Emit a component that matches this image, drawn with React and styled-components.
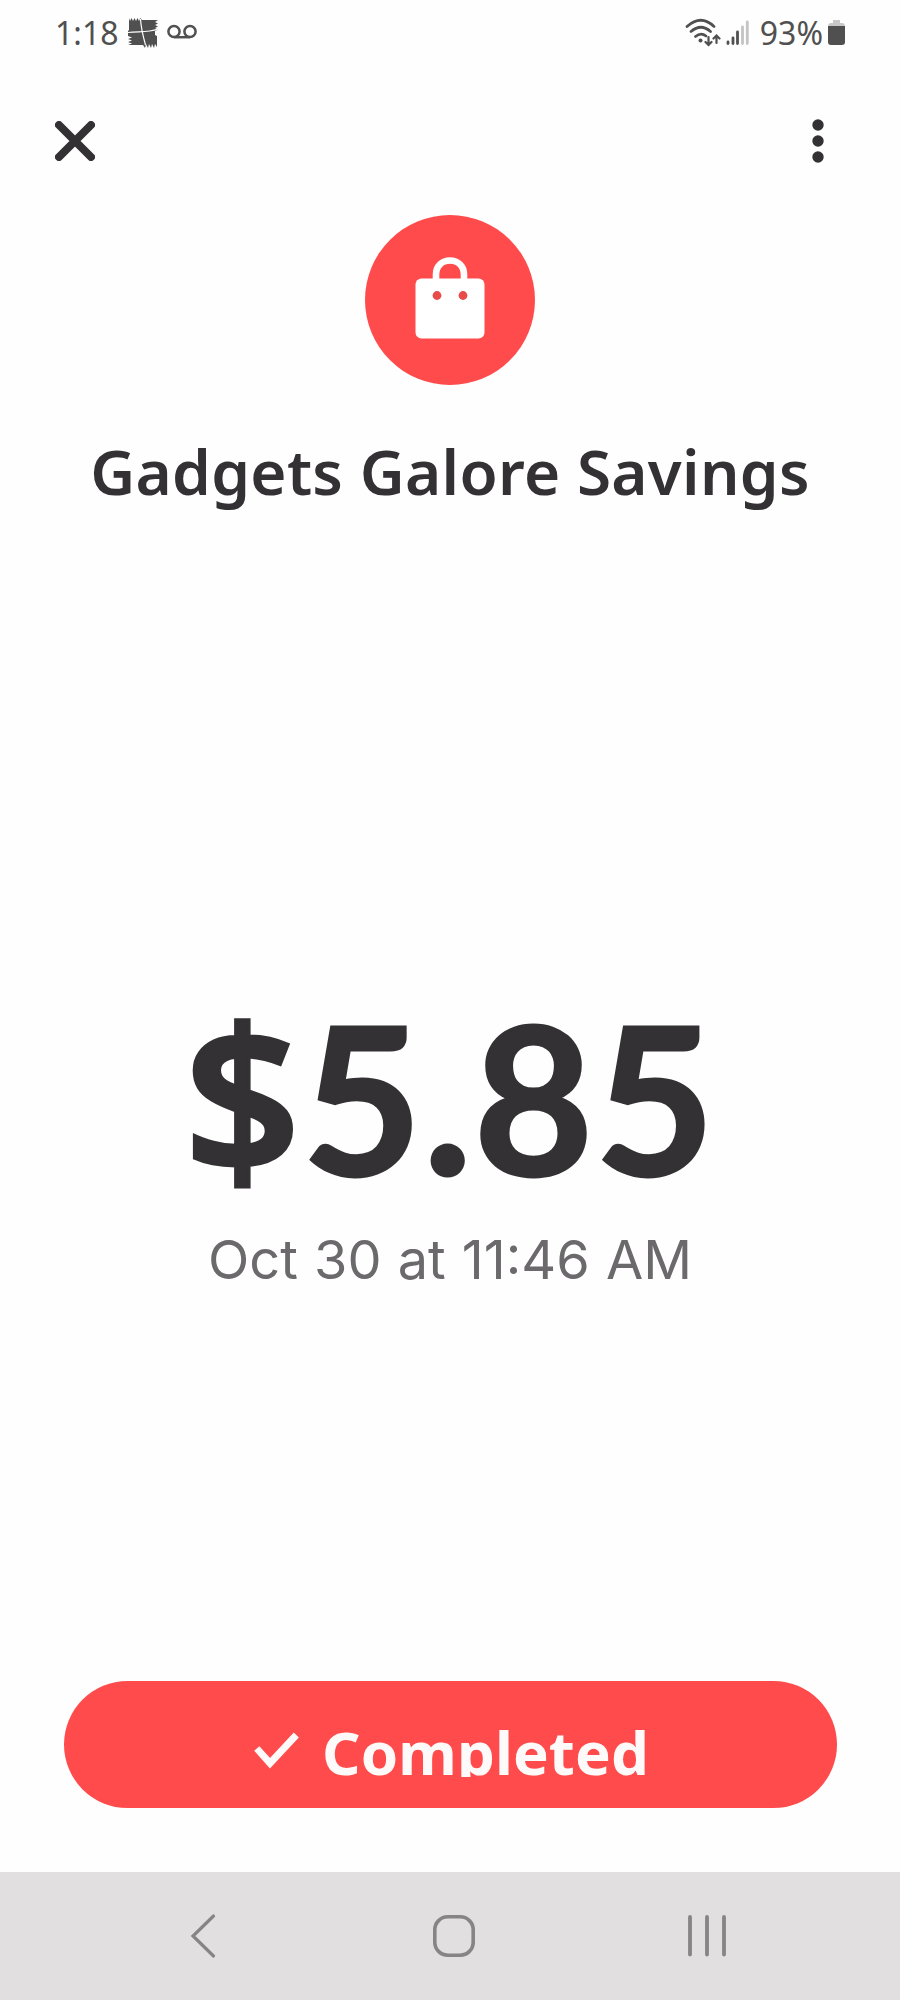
import React from "react"
import styled, { createGlobalStyle } from "styled-components"

const red = "#ff4b4b"
const dark = "#333133"
const grey = "#6b696b"
const statusGrey = "#505050"
const navGrey = "#868485"

const GlobalStyle = createGlobalStyle`
  body {
    margin: 0;
    background-color: #fefefe;
  }
`

const Screen = styled.main`
  background-color: #fefefe;
  box-sizing: border-box;
  display: flex;
  flex-direction: column;
  font-family: "Noto Sans", "Liberation Sans", sans-serif;
  height: 2000px;
  width: 900px;
`

const StatusBar = styled.div`
  align-items: center;
  box-sizing: border-box;
  color: ${statusGrey};
  display: flex;
  height: 68px;
  justify-content: space-between;
  padding: 0 55px 2px 55px;
`

const StatusGroup = styled.div`
  align-items: center;
  display: flex;
  gap: ${({ gap }) => gap}px;
`

const StatusText = styled.span`
  font-size: 32px;
  font-weight: 380;
  line-height: 44px;
  margin-left: ${({ left }) => left || 0}px;
  white-space: nowrap;
`

const TopBar = styled.header`
  align-items: center;
  display: flex;
  height: 146px;
  justify-content: space-between;
  padding: 0 76px 0 55px;
`

const IconButton = styled.button`
  background: none;
  border: 0;
  color: ${dark};
  display: flex;
  padding: 0;
`

const Avatar = styled.div`
  align-items: center;
  align-self: center;
  background-color: ${red};
  border-radius: 50%;
  display: flex;
  height: 170px;
  justify-content: center;
  margin-top: 1px;
  width: 170px;
`

const Title = styled.h1`
  color: ${dark};
  font-size: 62px;
  font-weight: 620;
  letter-spacing: 0.3px;
  line-height: 80px;
  margin: 46px 0 0;
  text-align: center;
  white-space: nowrap;
`

const Amount = styled.div`
  -webkit-text-stroke: 3px ${dark};
  color: ${dark};
  font-family: Lato, "Noto Sans", sans-serif;
  font-size: 206px;
  font-weight: 700;
  letter-spacing: 1.6px;
  line-height: 220px;
  margin-top: 475px;
  text-align: center;
`

const Currency = styled.span`
  font-family: "Noto Sans", sans-serif;
  font-size: 204px;
  font-weight: 580;
  line-height: 0;
`

const Timestamp = styled.div`
  color: ${grey};
  font-family: Inter, "Noto Sans", sans-serif;
  font-size: 54px;
  line-height: 70px;
  margin-top: 19px;
  text-align: center;
  word-spacing: 1px;
`

const CompletedButton = styled.button`
  align-items: flex-start;
  background-color: ${red};
  border: 0;
  border-radius: 64px;
  color: #fffafa;
  display: flex;
  font-family: inherit;
  height: 127px;
  justify-content: center;
  margin: auto 63.5px 64px;
  padding: 41px 0 0 3px;
  svg {
    margin: 10px 22px 0 0;
  }
`

// the line box is a little short, so the tail of the "p" is cut
const ButtonLabel = styled.span`
  font-size: 60px;
  font-weight: 700;
  height: 55px;
  letter-spacing: 0.1px;
  line-height: 60px;
  overflow: hidden;
`

const NavigationBar = styled.nav`
  align-items: center;
  background-color: #e1dfe0;
  box-sizing: border-box;
  display: flex;
  height: 128px;
  justify-content: space-between;
  padding: 0 174px 0 189px;
`

const NotificationIcon = () => (
  <svg width="32" height="34" viewBox="0 0 32 34" fill="currentColor">
    <path d="M2 2L3 5L4.5 2L6 5L7.5 2L9 5L10.500 2L12 5L13.500 2L15 4L31 4L28 6L31 7.500L28 9L31 10.500L28 12L31 13.500L28 15V19L30 20V31L28 28L27 32L25 28L24 32L22 28L21 32L19 28L18 32L16 29H1L5 27.500L1 26L5 24.500L1 23L5 21.500L1 20V15L2 14Z" />
    <path d="M13.500 3C14 12 16 20 18.500 29M1 16.500C11 15 20 17 31 13" stroke="#fefefe" strokeWidth="1.200" fill="none" />
  </svg>
)

const VoicemailIcon = () => (
  <svg width="30" height="18" viewBox="0 0 30 18" fill="none" stroke="currentColor" strokeWidth="2.5">
    <circle cx="7" cy="7.5" r="5.6" />
    <circle cx="23" cy="7.5" r="5.6" />
    <path d="M7 13.2H23" />
  </svg>
)

const WifiIcon = () => (
  <svg width="36" height="30" viewBox="0 0 36 30" fill="none" stroke="currentColor" strokeWidth="2.7" strokeLinecap="round">
    <path d="M2 8.5Q16 -4 29 8.5M6 13.5Q16 5 25.5 13.5M10.5 18.5Q16 14 21 18" />
    <circle cx="15.5" cy="22.5" r="2" fill="currentColor" stroke="none" />
    <path d="M23.5 19V26M20.5 24L23.5 27L26.5 24M31.5 25V18M28.5 20.5L31.5 17.5L34.5 20.5" strokeWidth="2.2" />
  </svg>
)

const SignalIcon = () => (
  <svg width="23" height="26" viewBox="0 0 23 26" stroke="currentColor" strokeWidth="2.8" strokeLinecap="round">
    <path d="M2 22V23.5M7 18V23.5M11.5 12V23.5" />
    <path d="M16.5 7V23.5M21.3 2V23.5" stroke="#c4c4c4" />
  </svg>
)

const BatteryIcon = () => (
  <svg width="17" height="26" viewBox="0 0 17 26">
    <path d="M5 0H12V3H14Q17 3 17 7H0Q0 3 3 3H5Z" fill="#c8c8c8" />
    <path d="M0 6H17V22Q17 25 14 25H3Q0 25 0 22Z" fill="currentColor" />
  </svg>
)

const CloseIcon = () => (
  <svg width="40" height="40" viewBox="0 0 40 40" stroke="currentColor" strokeWidth="8" strokeLinecap="round">
    <path d="M4 4L36 36M36 4L4 36" />
  </svg>
)

const MoreIcon = () => (
  <svg width="12" height="44" viewBox="0 0 12 44" fill="currentColor">
    <circle cx="6" cy="6" r="5.7" />
    <circle cx="6" cy="22" r="5.7" />
    <circle cx="6" cy="38" r="5.7" />
  </svg>
)

const BagIcon = () => (
  <svg width="170" height="170" viewBox="0 0 170 170">
    <path d="M71 67V59.500C71 51 77 45.500 85 45.500S99 51 99 59.500V67" fill="none" stroke="#fff" strokeWidth="6.6" />
    <rect x="50.5" y="63.5" width="69" height="60" rx="6" fill="#fff" />
    <circle cx="72" cy="80.5" r="4.4" fill="#e94a4a" />
    <circle cx="98" cy="80.5" r="4.4" fill="#e94a4a" />
  </svg>
)

const CheckIcon = () => (
  <svg width="46" height="38" viewBox="0 0 46 38" fill="none" stroke="currentColor" strokeWidth="7">
    <path d="M2.8 16.5L16 31.2L42.3 3" />
  </svg>
)

const BackIcon = () => (
  <svg width="27" height="46" viewBox="0 0 27 46" fill="none" stroke={navGrey} strokeWidth="3.2" strokeLinecap="round">
    <path d="M24.5 3L4 23L24.5 43" />
  </svg>
)

const HomeIcon = styled(({ className }) => (
  <svg className={className} width="42" height="42" viewBox="0 0 42 42" fill="none" stroke={navGrey} strokeWidth="3.6">
    <rect x="1.8" y="1.8" width="38.4" height="38.4" rx="13" />
  </svg>
))`
  margin-left: 4px;
`

const RecentsIcon = () => (
  <svg width="38" height="42" viewBox="0 0 38 42" stroke={navGrey} strokeWidth="3.8" strokeLinecap="round">
    <path d="M2 2V39.5M19 2V39.5M36 2V39.5" />
  </svg>
)

const App = () => (
  <Screen>
    <GlobalStyle />
    <StatusBar>
      <StatusGroup gap={8}>
        <StatusText>1:18</StatusText>
        <NotificationIcon />
        <VoicemailIcon />
      </StatusGroup>
      <StatusGroup gap={5}>
        <WifiIcon />
        <SignalIcon />
        <StatusText left={6}>93%</StatusText>
        <BatteryIcon />
      </StatusGroup>
    </StatusBar>
    <TopBar>
      <IconButton aria-label="Close">
        <CloseIcon />
      </IconButton>
      <IconButton aria-label="More">
        <MoreIcon />
      </IconButton>
    </TopBar>
    <Avatar>
      <BagIcon />
    </Avatar>
    <Title>Gadgets Galore Savings</Title>
    <Amount>
      <Currency>$</Currency>5.85
    </Amount>
    <Timestamp>Oct 30 at 11:46 AM</Timestamp>
    <CompletedButton>
      <CheckIcon />
      <ButtonLabel>Completed</ButtonLabel>
    </CompletedButton>
    <NavigationBar>
      <BackIcon />
      <HomeIcon />
      <RecentsIcon />
    </NavigationBar>
  </Screen>
)

export default App
